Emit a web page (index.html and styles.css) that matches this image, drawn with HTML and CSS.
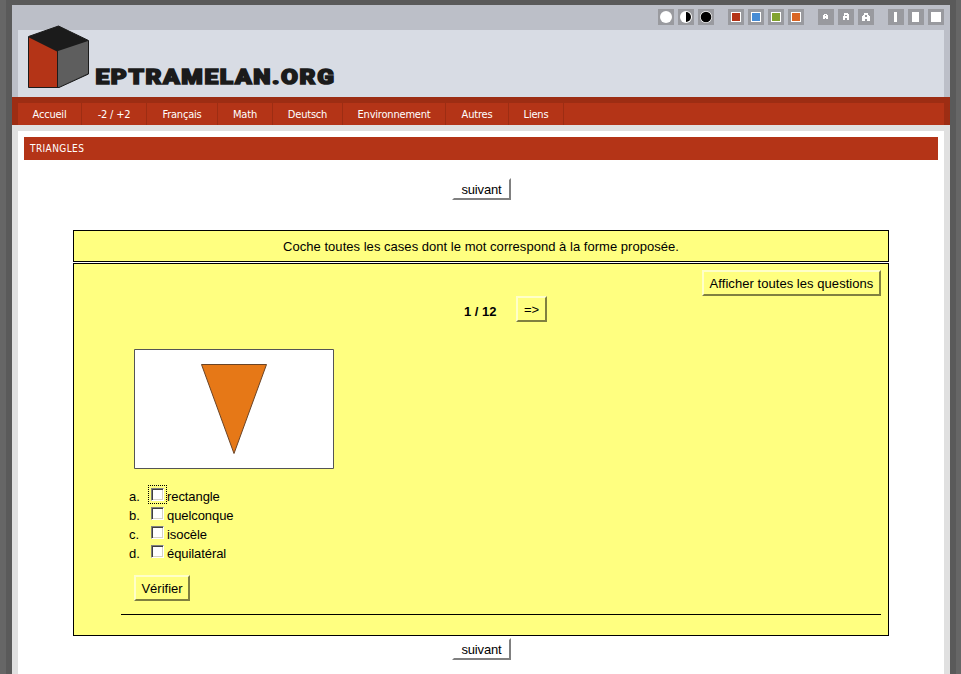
FILE: index.html
```html
<!DOCTYPE html>
<html lang="fr">
<head>
<meta charset="utf-8">
<title>Triangles</title>
<link rel="stylesheet" href="styles.css">
</head>
<body>
<div class="page">
  <header class="header">
    <div class="tools">
      <div class="group">
        <svg class="tool" viewBox="0 0 16 16"><circle cx="8" cy="8" r="6" fill="#fff"/></svg>
        <svg class="tool" viewBox="0 0 16 16"><circle cx="8" cy="8" r="6" fill="#fff"/><path d="M8 3a5 5 0 0 1 0 10z" fill="#000"/></svg>
        <svg class="tool" viewBox="0 0 16 16"><circle cx="8" cy="8" r="6" fill="#fff"/><circle cx="8" cy="8" r="5.3" fill="#000"/></svg>
      </div>
      <div class="group">
        <svg class="tool" viewBox="0 0 16 16"><path d="M3 3h10v10H3z" fill="#fff"/><path d="M4 4h8v8H4z" fill="#b43417"/></svg>
        <svg class="tool" viewBox="0 0 16 16"><path d="M3 3h10v10H3z" fill="#fff"/><path d="M4 4h8v8H4z" fill="#478cd4"/></svg>
        <svg class="tool" viewBox="0 0 16 16"><path d="M3 3h10v10H3z" fill="#fff"/><path d="M4 4h8v8H4z" fill="#82a32f"/></svg>
        <svg class="tool" viewBox="0 0 16 16"><path d="M3 3h10v10H3z" fill="#fff"/><path d="M4 4h8v8H4z" fill="#d96626"/></svg>
      </div>
      <div class="group">
        <svg class="tool" viewBox="0 0 16 16" fill="#fff" fill-rule="evenodd"><path d="M6 5h3v1h1v4H8V9H7v1H5V6h1zM7 6v1h1V6z"/></svg>
        <svg class="tool" viewBox="0 0 16 16" fill="#fff" fill-rule="evenodd"><path d="M6 4h4v1h1v6H9V9H7v2H5V7h1zM7 6v1h2V6z"/></svg>
        <svg class="tool" viewBox="0 0 16 16" fill="#fff" fill-rule="evenodd"><path d="M6 4h4v2h1v1h1v5H9v-2H7v2H4V7h1V6h1zM7 6v2h2V6z"/></svg>
      </div>
      <div class="group">
        <svg class="tool" viewBox="0 0 16 16"><path d="M6 3h3v10H6z" fill="#fff"/></svg>
        <svg class="tool" viewBox="0 0 16 16"><path d="M4 3h7v10H4z" fill="#fff"/></svg>
        <svg class="tool" viewBox="0 0 16 16"><path d="M3 3h10v10H3z" fill="#fff"/></svg>
      </div>
    </div>
    <div class="brand">
      <svg class="logo" width="320" height="67" viewBox="0 0 320 67">
        <path d="M10.5 6.5 40.500 -4 70.500 10.500V44L41 57.500H10.500z" fill="#1b1b1b" stroke="#1b1b1b"/>
        <path d="M11 7.500 39 21.500V57H11z" fill="#b43417"/>
        <path d="M40 21 70 11V43.500L41 57H40z" fill="#5e5e5e"/>
        <text class="brand-text" x="77.500" y="54.300" textLength="240" lengthAdjust="spacingAndGlyphs">EPTRAMELAN.ORG</text>
      </svg>
    </div>
  </header>
  <nav class="nav">
    <a class="w64">Accueil</a><a class="w65">-2 / +2</a><a class="w71">Français</a><a class="w55">Math</a><a class="w70">Deutsch</a><a class="w103">Environnement</a><a class="w63">Autres</a><a class="w55">Liens</a>
  </nav>
  <main class="main">
    <h1 class="title">TRIANGLES</h1>
    <div class="next next-top"><button class="btn btn-white">suivant</button></div>
    <p class="instructions"><span>Coche toutes les cases dont le mot correspond à la forme proposée.</span></p>
    <section class="quiz">
      <div class="all"><button class="btn btn-all">Afficher toutes les questions</button></div>
      <div class="pager"><b>1 / 12</b><button class="btn btn-go">=&gt;</button></div>
      <svg class="figure" width="200" height="120" viewBox="0 0 200 120">
        <path d="M.5.500h199v119H.5z" fill="#fff" stroke="#555"/>
        <path d="M67.500 15.500h65L100 104.500z" fill="#e67817" stroke="#6b4426"/>
      </svg>
      <ul class="answers">
        <li><span class="mark">a.</span><span class="focus"><i class="box"></i></span><label>rectangle</label></li>
        <li><span class="mark">b.</span><span class="slot"><i class="box"></i></span><label>quelconque</label></li>
        <li><span class="mark">c.</span><span class="slot"><i class="box"></i></span><label>isocèle</label></li>
        <li><span class="mark">d.</span><span class="slot"><i class="box"></i></span><label>équilatéral</label></li>
      </ul>
      <button class="btn btn-check">Vérifier</button>
      <div class="rule"></div>
    </section>
    <div class="next"><button class="btn btn-white">suivant</button></div>
  </main>
</div>
</body>
</html>
```
FILE: styles.css
```css
* { box-sizing: border-box; }
html { background: #666; overflow: hidden; }
body {
  margin: 0 5px 0 6px;
  height: 674px;
  overflow: hidden;
  padding: 5px 6px 0;
  background: #5a5a5a;
  font: 13px/19px "Liberation Sans", Arial, sans-serif;
  color: #000;
}
.page { width: 938px; height: 669px; display: flex; flex-direction: column; }
.header { height: 92px; background: #bcbfc8; padding: 0 6px; flex: none; }
.tools { height: 25px; padding-top: 4px; display: flex; justify-content: flex-end; gap: 14px; }
.group { display: flex; gap: 4px; }
.tool { width: 16px; height: 16px; background: #999a9f; display: block; }
.brand { height: 67px; background: #d8dce4; }
.logo { display: block; overflow: visible; }
.brand-text {
  font: 900 20px Roboto, sans-serif;
  letter-spacing: 1.3px;
  fill: #1b1b1b;
  stroke: #1b1b1b;
  stroke-width: 1.5;
}
.nav {
  flex: none;
  height: 28px;
  display: flex;
  background: #b43417;
  border: 6px solid #9d2d13;
  border-bottom: 0;
}
.nav a {
  height: 22px;
  border-right: 1px solid #9d2d13;
  color: #fff;
  font: 11px/23px "DejaVu Sans Condensed", "DejaVu Sans", sans-serif;
  letter-spacing: -.2px;
  text-align: center;
  white-space: nowrap;
}
.w55 { width: 55px; } .w63 { width: 63px; } .w64 { width: 64px; } .w65 { width: 65px; }
.w70 { width: 70px; } .w71 { width: 71px; } .w103 { width: 103px; }
.main { flex: 1; background: #fff; border: 6px solid #e0e0e0; border-bottom: 0; padding: 6px 6px 0; }
.title {
  margin: 0;
  height: 23px;
  padding-left: 6px;
  background: #b43417;
  color: #fff;
  font: 10px/23px "DejaVu Sans Condensed", "DejaVu Sans", sans-serif;
  letter-spacing: .4px;
}
.btn {
  display: block;
  margin: 0;
  padding: 2px 0 0;
  border: 2px solid;
  border-color: #ffffc8 #808040 #808040 #ffffc8;
  background: #ffff80;
  font: 13px/20px "Liberation Sans", Arial, sans-serif;
  color: #000;
  white-space: nowrap;
}
.btn-white {
  width: 59px;
  height: 22px;
  margin-left: 1px;
  line-height: 16px;
  letter-spacing: -.15px;
  background: #fff;
  border-color: #fff #808080 #808080 #fff;
}
.next { display: flex; justify-content: center; padding-top: 2px; }
.next-top { height: 70px; padding-top: 18px; }
.instructions {
  margin: 0 49px 1px;
  height: 32px;
  line-height: 32px;
  letter-spacing: .03px;
  text-align: center;
  background: #ffff80;
  border: 1px solid #000;
}
.quiz { margin: 0 49px; height: 373px; background: #ffff80; border: 1px solid #000; padding: 6px 7px 0 47px; }
.all { display: flex; justify-content: flex-end; }
.btn-all { width: 179px; height: 26px; letter-spacing: .05px; }
.pager { display: flex; padding-left: 343px; height: 26px; }
.pager b { width: 52px; line-height: 32px; }
.btn-go { width: 31px; height: 26px; }
.figure { display: block; margin: 27px 0 0 13px; }
.answers { list-style: none; margin: 18px 0 0 8px; padding: 0; letter-spacing: -.08px; }
.answers li { display: flex; height: 19px; }
.mark { width: 19px; }
.focus { width: 19px; height: 19px; margin-top: -2px; border: 1px dotted #000; padding: 2px; }
.slot { width: 19px; padding: 1px 3px; }
.box {
  display: block;
  width: 13px;
  height: 13px;
  background: #fff;
  border: 1px solid;
  border-color: #808080 #fff #fff #808080;
  box-shadow: inset 1px 1px #404040, inset -1px -1px #d4d0c8;
}
.btn-check { width: 56px; height: 26px; margin: 12px 0 0 13px; }
.rule { height: 1px; background: #000; margin-top: 13px; }
```
